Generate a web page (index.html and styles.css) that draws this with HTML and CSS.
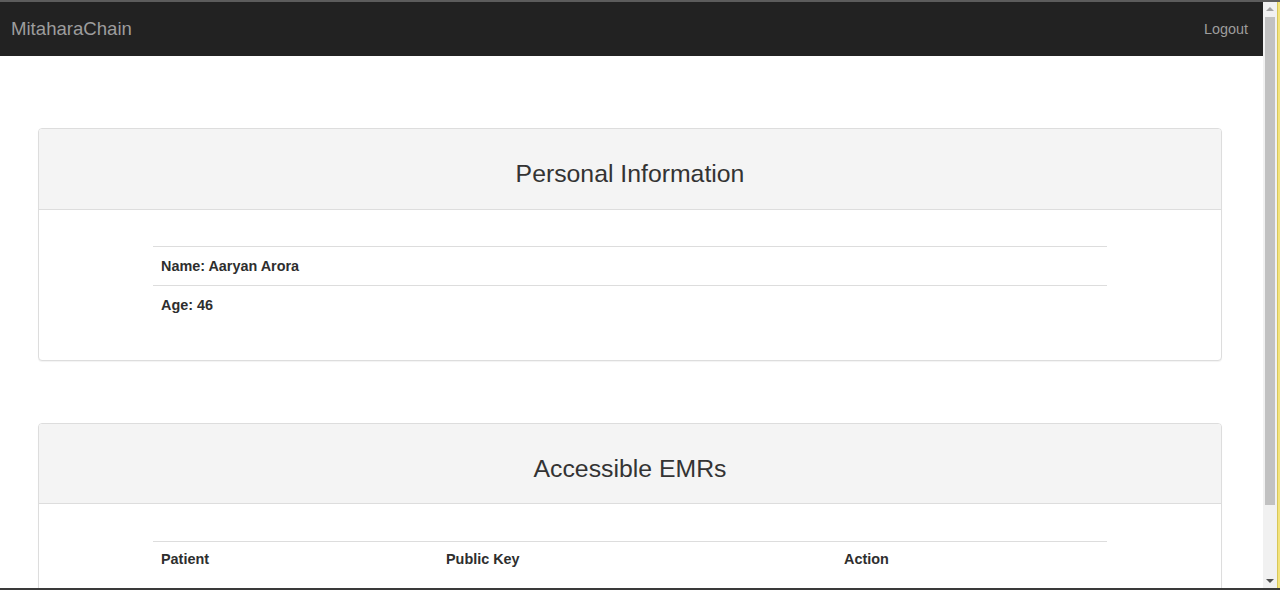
FILE: index.html
```html
<!DOCTYPE html>
<html lang="en">
<head>
<meta charset="utf-8">
<title>MitaharaChain</title>
<link rel="stylesheet" href="styles.css">
</head>
<body>
<div class="topline"></div>
<div class="window">
  <div class="page">
    <nav class="navbar">
      <a class="brand" href="#">MitaharaChain</a>
      <a class="nav-link" href="#">Logout</a>
    </nav>
    <main class="main">
      <section class="panel">
        <div class="panel-heading panel-heading-first"><h3 class="panel-title">Personal Information</h3></div>
        <div class="panel-body">
          <table class="table">
            <tbody>
              <tr><td>Name: Aaryan Arora</td></tr>
              <tr><td>Age: 46</td></tr>
            </tbody>
          </table>
        </div>
      </section>
      <section class="panel panel-second">
        <div class="panel-heading"><h3 class="panel-title">Accessible EMRs</h3></div>
        <div class="panel-body panel-body-emr">
          <table class="table table-emr">
            <thead>
              <tr>
                <th class="col-patient">Patient</th>
                <th class="col-key">Public Key</th>
                <th class="col-action">Action</th>
              </tr>
            </thead>
          </table>
        </div>
      </section>
    </main>
  </div>
  <div class="scrollbar">
    <div class="sb-arrow sb-up"></div>
    <div class="sb-track">
      <div class="sb-thumb"></div>
    </div>
    <div class="sb-arrow sb-down"></div>
  </div>
  <div class="edge"></div>
</div>
<div class="bottomline"></div>
</body>
</html>
```

FILE: styles.css
```css
html, body {
  margin: 0;
  padding: 0;
  height: 590px;
  overflow: hidden;
}
body {
  display: flex;
  flex-direction: column;
  font-family: "Liberation Sans", Arial, Helvetica, sans-serif;
  font-size: 14.4px;
  color: #333;
  background: #fff;
}
.topline {
  height: 2px;
  background: #5c5c5c;
  flex: none;
}
.bottomline {
  height: 2px;
  background: #3a3a3a;
  flex: none;
}
.window {
  flex: 1;
  display: flex;
  min-height: 0;
}
.page {
  flex: 1;
  min-width: 0;
  overflow: hidden;
}
.navbar {
  height: 54px;
  background: #222;
  display: flex;
  align-items: center;
  justify-content: space-between;
  padding: 0 15px 0 11px;
}
.brand {
  color: #9d9d9d;
  text-decoration: none;
  font-size: 18.6px;
}
.nav-link {
  color: #9d9d9d;
  text-decoration: none;
  font-size: 14.4px;
}
.main {
  padding-top: 72px;
}
.panel {
  margin-left: 38px;
  width: 1184px;
  box-sizing: border-box;
  border: 1px solid #ddd;
  border-radius: 4px;
  background: #fff;
  box-shadow: 0 1px 1px rgba(0, 0, 0, 0.05);
}
.panel-second {
  margin-top: 62px;
}
.panel-heading {
  height: 80px;
  box-sizing: border-box;
  background: #f4f4f4;
  border-bottom: 1px solid #ddd;
  border-radius: 3px 3px 0 0;
  padding-top: 31px;
  text-align: center;
}
.panel-heading-first {
  height: 81px;
}
.panel-title {
  margin: 0;
  font-size: 24.8px;
  font-weight: normal;
  line-height: 27px;
  color: #333;
}
.panel-body {
  padding: 36px 0 36px;
}
.panel-body-emr {
  padding-top: 37px;
}
.table {
  width: 954px;
  margin: 0 auto;
  border-collapse: collapse;
}
.table td,
.table th {
  border-top: 1px solid #ddd;
  padding: 9px 8px;
  line-height: 20px;
  font-weight: bold;
  text-align: left;
  font-size: 14.4px;
  color: #2e2e2e;
}
.table-emr th {
  padding-top: 7px;
}
.col-patient { width: 269px; }
.col-key { width: 382px; }
.col-action { width: auto; }
.scrollbar {
  width: 14px;
  flex: none;
  background: #f1f1f1;
  display: flex;
  flex-direction: column;
  align-items: center;
}
.sb-arrow {
  height: 15px;
  width: 14px;
  position: relative;
}
.sb-up::after,
.sb-down::after {
  content: "";
  position: absolute;
  left: 3px;
  border-left: 4px solid transparent;
  border-right: 4px solid transparent;
}
.sb-up::after {
  top: 5px;
  border-bottom: 4px solid #a3a3a3;
}
.sb-down::after {
  bottom: 5px;
  border-top: 4px solid #505050;
}
.sb-track {
  flex: 1;
  width: 100%;
  display: flex;
  justify-content: center;
}
.sb-thumb {
  width: 10px;
  height: 488px;
  background: #c1c1c1;
}
.edge {
  width: 3px;
  flex: none;
  background: #f3e37c;
  border-left: 1px solid #d8c75a;
  box-sizing: border-box;
}
```
